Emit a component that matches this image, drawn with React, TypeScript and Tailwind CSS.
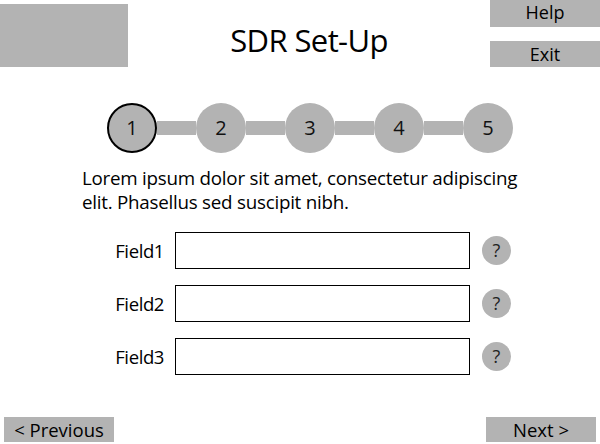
const steps = [1, 2, 3, 4, 5];
const fields = ["Field1", "Field2", "Field3"];

function Step({ n, active }: { n: number; active?: boolean }) {
  return (
    <div
      className={`w-[50px] h-[50px] rounded-full bg-[#b3b3b3] flex items-center justify-center text-[20px] text-[#111] ${
        active ? "border-2 border-black" : ""
      }`}
    >
      {n}
    </div>
  );
}

export default function App() {
  return (
    <div
      className="w-[600px] h-[444px] bg-white text-black flex flex-col overflow-hidden"
      style={{ fontFamily: '"Open Sans", "Noto Sans", sans-serif' }}
    >
      {/* header */}
      <div className="flex items-start">
        <div className="w-[128px] h-[63px] mt-[4px] bg-[#b3b3b3]" />
        <div className="flex-1 text-center pt-[20px] text-[31px] leading-[40px] tracking-[-0.6px]">
          SDR Set-Up
        </div>
        <div className="w-[110px] flex flex-col">
          <button className="h-[27px] bg-[#b3b3b3] text-[18px] leading-[24px] pb-[3px]">Help</button>
          <button className="h-[26px] mt-[14px] bg-[#b3b3b3] text-[18px] leading-[26px]">Exit</button>
        </div>
      </div>

      {/* steps */}
      <div className="flex items-center ml-[107px] mt-[36px]">
        {steps.map((n, i) => (
          <div key={n} className="flex items-center">
            {i > 0 && <div className="w-[39px] h-[14px] bg-[#b3b3b3]" />}
            <Step n={n} active={i === 0} />
          </div>
        ))}
      </div>

      <p className="ml-[82px] mt-[13px] w-[452px] text-[18.8px] leading-[24px] tracking-[-0.25px]">
        Lorem ipsum dolor sit amet, consectetur adipiscing elit. Phasellus sed suscipit nibh.
      </p>

      {/* fields */}
      <div className="flex flex-col gap-[16px] mt-[18px]">
        {fields.map((f) => (
          <div key={f} className="flex items-center">
            <label className="w-[164px] text-right text-[18.5px] tracking-[-0.4px]">{f}</label>
            <input className="ml-[11px] w-[295px] h-[37px] border border-black bg-white outline-none" />
            <div className="ml-[12px] w-[29px] h-[29px] rounded-full bg-[#b3b3b3] flex items-center justify-center text-[18px] font-medium text-[#222]">
              ?
            </div>
          </div>
        ))}
      </div>

      {/* footer */}
      <div className="mt-auto mb-[2px] flex justify-between px-[4px]">
        <button className="w-[110px] h-[25px] bg-[#b3b3b3] text-[18.5px] leading-[25px]">&lt; Previous</button>
        <button className="w-[110px] h-[25px] bg-[#b3b3b3] text-[18.5px] leading-[25px]">Next &gt;</button>
      </div>
    </div>
  );
}
